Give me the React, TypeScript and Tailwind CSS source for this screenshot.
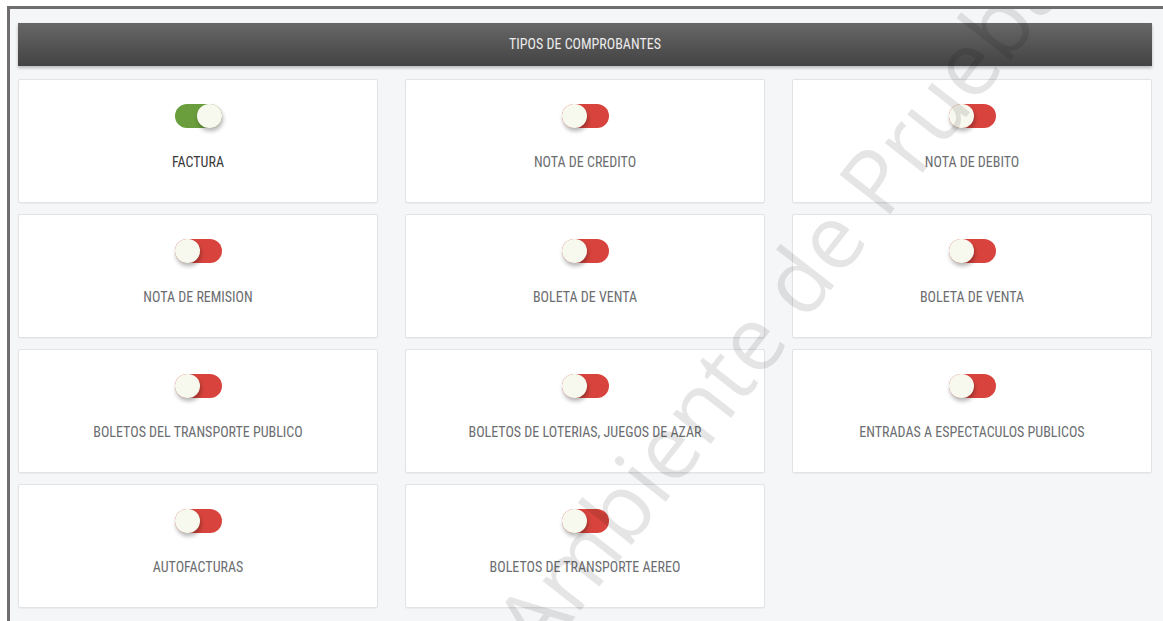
import React, { useState } from 'react';

type Comprobante = { id: number; label: string; enabled: boolean };

const initialComprobantes: Comprobante[] = [
  { id: 1, label: 'FACTURA', enabled: true },
  { id: 2, label: 'NOTA DE CREDITO', enabled: false },
  { id: 3, label: 'NOTA DE DEBITO', enabled: false },
  { id: 4, label: 'NOTA DE REMISION', enabled: false },
  { id: 5, label: 'BOLETA DE VENTA', enabled: false },
  { id: 6, label: 'BOLETA DE VENTA', enabled: false },
  { id: 7, label: 'BOLETOS DEL TRANSPORTE PUBLICO', enabled: false },
  { id: 8, label: 'BOLETOS DE LOTERIAS, JUEGOS DE AZAR', enabled: false },
  { id: 9, label: 'ENTRADAS A ESPECTACULOS PUBLICOS', enabled: false },
  { id: 10, label: 'AUTOFACTURAS', enabled: false },
  { id: 11, label: 'BOLETOS DE TRANSPORTE AEREO', enabled: false },
];

const condensed = "font-['Roboto_Condensed','Roboto','Liberation_Sans',sans-serif] [font-stretch:condensed]";

const Toggle: React.FC<{ on: boolean; onClick: () => void }> = ({ on, onClick }) => (
  <button
    type="button"
    onClick={onClick}
    className={`relative h-6 w-[47px] rounded-full ${on ? 'bg-[#6a9e3c]' : 'bg-[#d8443d]'}`}
  >
    <span
      className={`absolute top-0 h-6 w-[25px] rounded-full bg-[#f7f8ee] shadow-[1px_3px_4px_rgba(0,0,0,0.3)] ${
        on ? 'right-0' : 'left-0'
      }`}
    />
  </button>
);

export default function App() {
  const [items, setItems] = useState(initialComprobantes);

  const toggle = (id: number) =>
    setItems((prev) => prev.map((c) => (c.id === id ? { ...c, enabled: !c.enabled } : c)));

  return (
    <div className="h-[621px] w-full overflow-hidden bg-white pt-[6px] pl-[7px]">
      <div className="relative h-full overflow-hidden border-t-[3px] border-l-[3px] border-[#6f6d6d] bg-[#f5f6f8] pt-[14px] pl-[8px] pr-[11px]">
        {/* Section header */}
        <div className="flex h-[43px] items-center justify-center bg-gradient-to-b from-[#676767] to-[#434343] shadow-[0_2px_3px_rgba(0,0,0,0.25)]">
          <span className={`${condensed} text-[14px] text-[#ececec]`}>TIPOS DE COMPROBANTES</span>
        </div>

        <div className="mt-[13px] grid grid-cols-3 gap-x-[27px] gap-y-[11px]">
          {items.map((c) => (
            <div
              key={c.id}
              className="flex h-[124px] flex-col items-center rounded-[2px] border border-[#e2e3e5] bg-white pt-6 shadow-[0_1px_1px_rgba(0,0,0,0.04)]"
            >
              <Toggle on={c.enabled} onClick={() => toggle(c.id)} />
              <span
                className={`${condensed} mt-[24px] text-[14px] leading-5 ${
                  c.enabled ? 'text-[#3a3a3a]' : 'text-[#6b6d70]'
                }`}
              >
                {c.label}
              </span>
            </div>
          ))}
        </div>

        {/* Test environment watermark */}
        <div className="pointer-events-none absolute left-[768px] top-[292px] -translate-x-1/2 -translate-y-1/2 -rotate-[52deg] whitespace-nowrap font-['Open_Sans',sans-serif] text-[90px] leading-none text-black/[0.1]">
          Ambiente de Prueba
        </div>
      </div>
    </div>
  );
}
